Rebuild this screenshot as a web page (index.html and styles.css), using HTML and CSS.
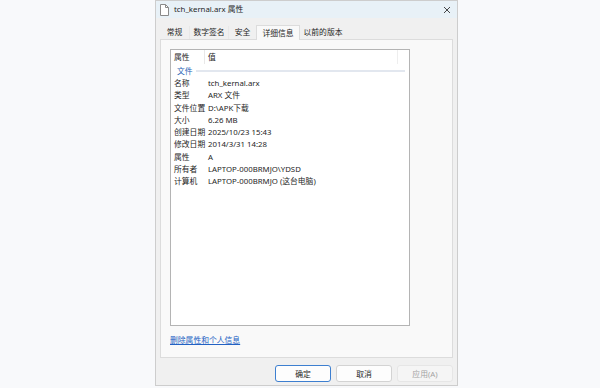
FILE: index.html
```html
<!DOCTYPE html>
<html lang="zh-CN">
<head>
    <meta charset="UTF-8">
    <title>tch_kernal.arx 属性</title>
    <link rel="stylesheet" href="styles.css">
</head>
<body>
    <div class="dialog">
        <div class="titlebar">
            <svg class="file-icon" width="9" height="12" viewBox="0 0 9 12">
                <path d="M0.5 0.5 H5.5 L8.5 3.5 V11.5 H0.5 Z" fill="#fff" stroke="#8a8a8a"/>
                <path d="M5.5 0.5 V3.5 H8.5" fill="none" stroke="#8a8a8a"/>
            </svg>
            <span class="title">tch_kernal.arx 属性</span>
            <svg class="close-icon" width="8" height="8" viewBox="0 0 8 8">
                <path d="M1 1 L7 7 M7 1 L1 7" stroke="#333" stroke-width="0.9"/>
            </svg>
        </div>

        <div class="tabs">
            <div class="tab tab-general">常规</div>
            <div class="tab tab-sign">数字签名</div>
            <div class="tab tab-security">安全</div>
            <div class="tab tab-details active">详细信息</div>
            <div class="tab tab-versions">以前的版本</div>
        </div>

        <div class="panel">
            <div class="prop-list">
                <div class="prop-header">
                    <span class="col-name">属性</span>
                    <span class="col-value">值</span>
                    <span class="col-rest"></span>
                </div>
                <div class="prop-group">
                    <span>文件</span>
                    <div class="group-line"></div>
                </div>
                <div class="prop-row"><span>名称</span><span>tch_kernal.arx</span></div>
                <div class="prop-row"><span>类型</span><span>ARX 文件</span></div>
                <div class="prop-row"><span>文件位置</span><span>D:\APK下载</span></div>
                <div class="prop-row"><span>大小</span><span>6.26 MB</span></div>
                <div class="prop-row"><span>创建日期</span><span>2025/10/23 15:43</span></div>
                <div class="prop-row"><span>修改日期</span><span>2014/3/31 14:28</span></div>
                <div class="prop-row"><span>属性</span><span>A</span></div>
                <div class="prop-row"><span>所有者</span><span>LAPTOP-000BRMJO\YDSD</span></div>
                <div class="prop-row"><span>计算机</span><span>LAPTOP-000BRMJO (这台电脑)</span></div>
            </div>
            <a class="remove-link" href="#">删除属性和个人信息</a>
        </div>

        <div class="buttons">
            <button class="btn btn-default">确定</button>
            <button class="btn">取消</button>
            <button class="btn" disabled>应用(A)</button>
        </div>
    </div>
</body>
</html>
```

FILE: styles.css
```css
* {
    box-sizing: border-box;
}

body {
    margin: 0;
    background: #f8f9fb;
    font-family: "Noto Sans", "Noto Sans CJK SC", sans-serif;
    font-size: 7.8px;
    color: #262626;
}

.dialog {
    width: 303px;
    height: 386px;
    margin-left: 155px;
    border: 1px solid #cdcdcd;
    background: #f0f0f0;
    display: flex;
    flex-direction: column;
}

.titlebar {
    height: 17px;
    background: #e8f1f7;
    display: flex;
    align-items: center;
    padding: 0 5px 0 4px;
}

.file-icon {
    margin-top: 1px;
}

.title {
    margin-left: 5px;
    flex: 1;
    line-height: 1;
}

.close-icon {
    margin-right: 1px;
}

/* tab strip */
.tabs {
    display: flex;
    margin: 6px 0 0 4px;
    height: 15px;
    align-items: flex-end;
}

.tab {
    height: 13px;
    line-height: 13px;
    text-align: center;
    border-right: 1px solid #e8e8e8;
}

.tab-general { width: 30px; }
.tab-sign { width: 39px; }
.tab-security { width: 27px; border-right: none; }
.tab-details { width: 44px; }
.tab-versions { width: 46px; border-right: none; }

.tab.active {
    height: 15px;
    line-height: 15px;
    background: #f9f9f9;
    border: 1px solid #dcdcdc;
    border-bottom: none;
    margin-bottom: -1px;
    position: relative;
    z-index: 1;
}

.panel {
    margin: 0 4px 0 4px;
    height: 319px;
    border: 1px solid #dcdcdc;
    background: #f9f9f9;
    padding: 9px 9px 0 9px;
}

/* details list */
.prop-list {
    width: 240px;
    height: 277px;
    background: #fff;
    border: 1px solid #b4b4b4;
}

.prop-header {
    display: flex;
    height: 14px;
    align-items: center;
}

.prop-header span {
    height: 14px;
    line-height: 14px;
    padding-left: 3px;
}

.col-name {
    width: 34px;
    border-right: 1px solid #e8e8e8;
}

.col-value {
    width: 193px;
    border-right: 1px solid #eeeeee;
}

.prop-group {
    display: flex;
    align-items: center;
    height: 13px;
    padding-left: 6px;
    color: #1f5fb4;
}

.group-line {
    flex: 1;
    height: 2px;
    background: #e2e7ef;
    margin: 0 4px 0 3px;
}

.prop-row {
    display: grid;
    grid-template-columns: 34px 1fr;
    height: 12.3px;
    line-height: 12.3px;
    padding-left: 3px;
    white-space: nowrap;
}

.remove-link {
    display: block;
    margin-top: 9px;
    line-height: 10px;
    color: #2261c3;
    text-decoration: underline;
    width: max-content;
}

/* bottom buttons */
.buttons {
    display: flex;
    justify-content: flex-end;
    gap: 5px;
    padding: 7px 4px 0 0;
}

.btn {
    width: 56px;
    height: 17px;
    padding: 0;
    font-family: inherit;
    font-size: 7.8px;
    color: #262626;
    background: #fdfdfd;
    border: 1px solid #d3d3d3;
    border-radius: 3px;
}

.btn-default {
    border-color: #3d7fd0;
}

.btn:disabled {
    background: #f5f5f5;
    border-color: #e6e6e6;
    color: #a3a3a3;
}
```
